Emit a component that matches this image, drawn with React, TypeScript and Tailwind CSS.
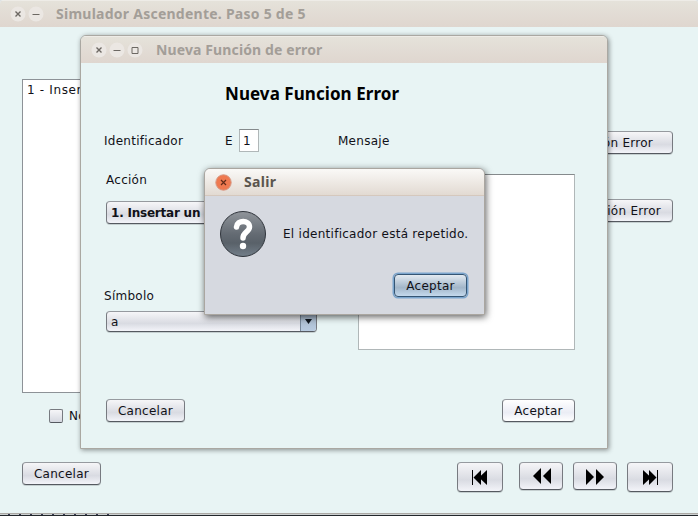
import React from "react";

const ui = "font-['DejaVu_Sans','Noto_Sans',sans-serif] text-[12px] leading-[14px] tracking-[0.27px] text-[#111118]";
const title = "font-['Noto_Sans',sans-serif] font-bold whitespace-nowrap";
const face =
  "border border-[#777a80] border-t-[#969a9f] border-b-[#555960] rounded-[4px] bg-linear-to-b from-[#f6f6f8] via-[#d9dbe2] via-60% to-[#f3f4f9] shadow-[0_1px_0_#c5cfd0]";

function Button({ children, className = "" }: { children?: React.ReactNode; className?: string }) {
  return (
    <button className={`flex h-[23px] shrink-0 items-center justify-center whitespace-nowrap ${face} ${ui} ${className}`}>
      {children}
    </button>
  );
}

function Control({ kind }: { kind: "close" | "min" | "max" }) {
  return (
    <svg className="h-[16px] w-[16px] shrink-0" viewBox="0 0 16 16" fill="none" stroke="#6c6863">
      <circle cx="8" cy="8" r="7.5" fill="#ebe7e3" stroke="none" />
      {kind === "close" && <path d="M5.5 5.5l5 5M10.5 5.5l-5 5" strokeWidth="1.4" />}
      {kind === "min" && <path d="M4.5 8.5h7" />}
      {kind === "max" && <path d="M5 5.5h6v6h-6z" />}
    </svg>
  );
}

function Rewind({ bar = false, flip = false }: { bar?: boolean; flip?: boolean }) {
  return (
    <svg className={`h-[16px] w-[18px] ${flip ? "-scale-x-100" : ""}`} viewBox="0 0 18 16" fill="#000">
      {bar ? (
        <path d="M1 1h1v15H1zM10 1v15L2.500 8.500zM16 1v15L8 8.500z" />
      ) : (
        <path d="M8 0v16L0 8zM18 0v16L10 8z" />
      )}
    </svg>
  );
}

function Combo({ children, className = "" }: { children: React.ReactNode; className?: string }) {
  return (
    <div className={`flex w-[211px] items-center overflow-hidden pl-1 ${face} ${ui} ${className}`}>
      <span className="flex-1 whitespace-nowrap">{children}</span>
      <span className="flex h-full w-4 items-center justify-center border-l border-[#78899b] bg-linear-to-b from-[#a5b6c8] to-[#b8cbe0]">
        <svg className="h-[5px] w-[7px]" viewBox="0 0 7 5"><path d="M0 0h7L3.500 5z" fill="#101820" /></svg>
      </span>
    </div>
  );
}

function MainWindow() {
  return (
    <section className="flex h-[514px] w-[698px] flex-col overflow-hidden rounded-t-[4px] border-b border-[#aaa8a4] bg-[#e8f4f4]">
      <header className="flex h-[27px] shrink-0 items-center gap-[2px] border-t border-[#eeece7] bg-linear-to-b from-[#e5e2da] to-[#dfd6cf] pb-px pl-[10px]">
        <Control kind="close" />
        <Control kind="min" />
        <h1 className={`${title} ml-[10px] text-[14px] leading-[18px] tracking-[0.25px] text-[#a39e98]`}>Simulador Ascendente. Paso 5 de 5</h1>
      </header>
      <div className="flex h-[366px] shrink-0 justify-between pl-[22px] pr-[25px] pt-[52px]">
        <div className={`h-[314px] w-[300px] border border-[#8d9297] bg-white pl-[4px] pt-[3px] ${ui} tracking-[0.65px]!`}>1 - Insertar</div>
        <div className="flex flex-col gap-[45px] pt-[52px]">
          <Button className="w-[170px] justify-end! pr-[19px]">Función Error</Button>
          <Button className="w-[170px] justify-end! pr-[11px]">Función Error</Button>
        </div>
      </div>
      <label className={`ml-[49px] mt-[16px] flex h-[14px] shrink-0 items-center gap-[6px] ${ui}`}>
        <span className="h-[14px] w-[14px] rounded-[2px] border border-[#777a80] border-b-[#555960] bg-linear-to-b from-[#f6f6f8] to-[#d5d8e0]" />
        No
      </label>
      <footer className="mt-[39px] flex items-start pl-[22px] pr-[25px]">
        <Button className="w-[79px]">Cancelar</Button>
        <Button className="ml-auto h-[30px]! w-[46px]"><Rewind bar /></Button>
        <Button className="ml-[16px] h-[28px]! w-[44px] pb-px pl-[2px]"><Rewind /></Button>
        <Button className="ml-[10px] h-[28px]! w-[44px] pt-px"><Rewind flip /></Button>
        <Button className="ml-[10px] h-[30px]! w-[46px]"><Rewind bar flip /></Button>
      </footer>
    </section>
  );
}

function ErrorFunctionWindow() {
  return (
    <section className={`absolute left-[80px] top-[35px] flex h-[414px] w-[528px] flex-col overflow-hidden rounded-t-[6px] border border-[#aaa8a2] bg-[#e8f4f4] shadow-[1px_1px_5px_#00000070] ${ui}`}>
      <header className="flex h-[27px] shrink-0 items-center gap-[2px] border-t border-[#eeece7] bg-linear-to-b from-[#e5e2da] to-[#dfd6cf] pb-px pl-[10px]">
        <Control kind="close" />
        <Control kind="min" />
        <Control kind="max" />
        <h2 className={`${title} ml-[11px] text-[14px] leading-[18px] tracking-[0.12px] text-[#a39e98]`}>Nueva Función de error</h2>
      </header>
      <h3 className={`${title} ml-[144px] mt-[19px] h-[24px] shrink-0 text-[17px] leading-[24px] tracking-[0.06px] text-black`}>Nueva Funcion Error</h3>
      <div className="mt-[23px] flex h-[23px] shrink-0 items-center pl-[23px]">
        <span className="w-[121px]">Identificador</span>
        <span className="w-[14px]">E</span>
        <span className="flex h-[23px] w-[20px] items-center border border-[#b0b7b8] border-t-[#858a8c] bg-white pl-[3px]">1</span>
        <span className="ml-[79px]">Mensaje</span>
      </div>
      <div className="flex h-[198px] shrink-0 justify-between pl-[25px] pr-[32px]">
        <div className="flex flex-col pt-[21px]">
          <span>Acción</span>
          <Combo className="mt-[14px] h-[23px] font-bold tracking-[-0.22px]!">1. Insertar un</Combo>
          <span className="-ml-[2px] mt-[65px]">Símbolo</span>
          <Combo className="mt-[8px] h-[21px]">a</Combo>
        </div>
        <div className="mt-[22px] h-[176px] w-[217px] border border-[#b0b7b8] border-t-[#858a8c] bg-white" />
      </div>
      <footer className="mt-[49px] flex justify-between pl-[25px] pr-[32px]">
        <Button className="w-[79px]">Cancelar</Button>
        <Button className="w-[73px] via-[#ebedf5]! from-white! to-white!">Aceptar</Button>
      </footer>
    </section>
  );
}

function ExitDialog() {
  return (
    <section className={`absolute left-[204px] top-[168px] flex h-[147px] w-[281px] flex-col overflow-hidden rounded-t-[6px] border border-[#aaa6a0] bg-[#d6d9e0] shadow-[1px_2px_7px_#000000a0] ${ui}`}>
      <header className="flex h-[27px] shrink-0 items-center border-b border-[#d5c8bd] bg-linear-to-b from-[#faf9f7] to-[#e2dad2] pl-[10px]">
        <svg className="h-[17px] w-[17px]" viewBox="0 0 17 17">
          <circle cx="8.500" cy="8.500" r="7.700" fill="#ef7950" stroke="#d69782" />
          <path d="M6 6l5 5M11 6l-5 5" stroke="#632b19" strokeWidth="1.200" />
        </svg>
        <h2 className={`${title} ml-[12px] text-[14px] leading-[18px] tracking-[0.3px] text-[#5b554e]`}>Salir</h2>
      </header>
      <div className="mt-[14px] flex h-[48px] shrink-0 items-center pl-[14px]">
        <svg className="h-[48px] w-[48px] shrink-0" viewBox="0 0 48 48">
          <defs>
            <linearGradient id="questionFace" x1="0" y1="0" x2="0" y2="1">
              <stop offset="0" stopColor="#90959b" /><stop offset=".5" stopColor="#646b73" />
              <stop offset=".7" stopColor="#596169" /><stop offset="1" stopColor="#737f8a" />
            </linearGradient>
          </defs>
          <circle cx="24" cy="24" r="22.500" fill="url(#questionFace)" stroke="#30353c" />
          <path d="M17.500 17C18 9.500 30.500 9.500 30.500 17C30.500 22 24 22 24 28" fill="none" stroke="#fff" strokeWidth="5.500" strokeLinecap="round" />
          <circle cx="24" cy="36" r="3.200" fill="#fff" />
        </svg>
        <span className="ml-[16px] whitespace-nowrap">El identificador está repetido.</span>
      </div>
      <div className="mt-[16px] flex justify-end pr-[17px]">
        <Button className="w-[73px] border-[#345574]! from-[#e3eaf1]! via-[#a2b6c9]! to-[#c4d9ed]! shadow-[0_0_0_1.500px_#7ba5cd]!">Aceptar</Button>
      </div>
    </section>
  );
}

export default function App() {
  return (
    <main className="relative h-[516px] w-[698px] overflow-hidden bg-[#dfe2e3]">
      <MainWindow />
      <div className="flex h-px gap-[9px] bg-[#ccd0d1] pl-[8px]">
        {Array.from({ length: 10 }, (_, i) => (
          <span key={i} className="h-px w-[2px] bg-[#33364e]" />
        ))}
      </div>
      <div className="h-px bg-[#22272b]" />
      <ErrorFunctionWindow />
      <ExitDialog />
    </main>
  );
}
